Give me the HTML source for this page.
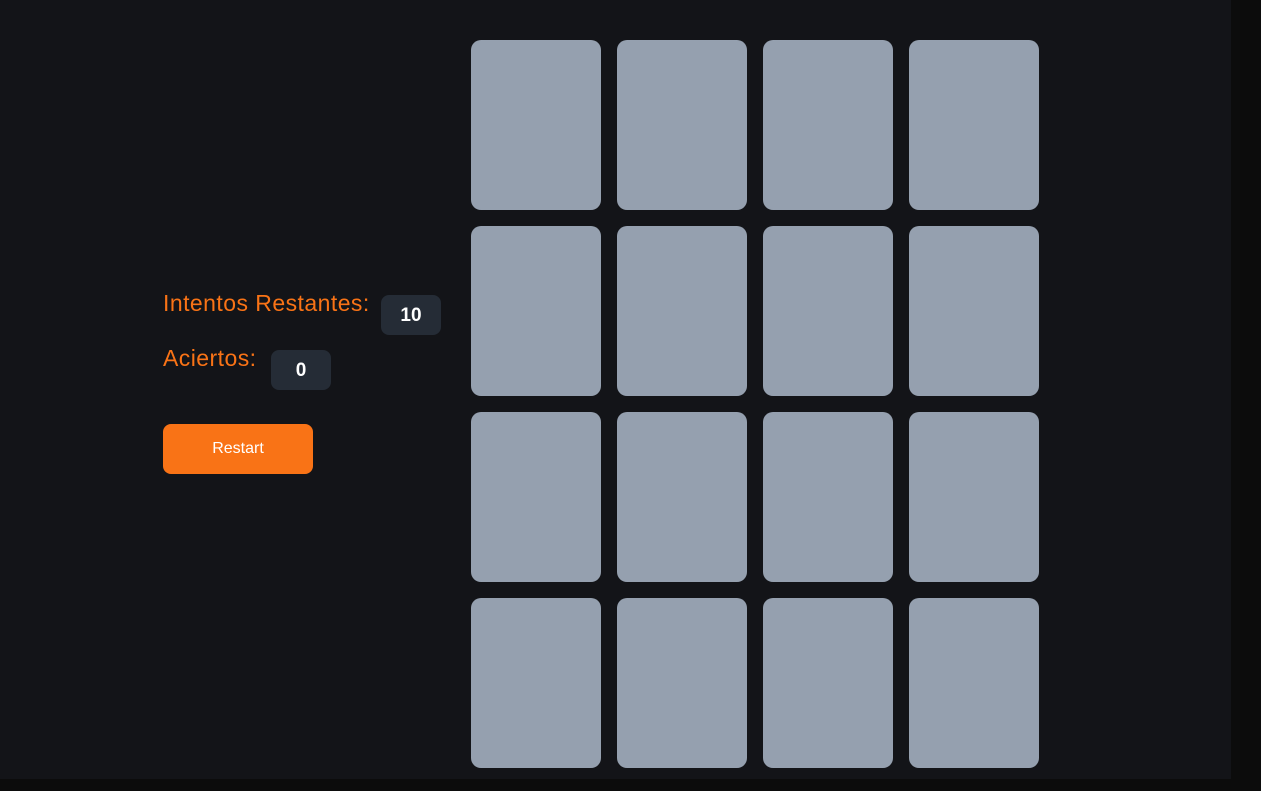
<!DOCTYPE html>
<html><head><style>
body{margin:0;width:1261px;height:791px;background:#0c0c0c;overflow:hidden;font-family:"Liberation Sans",sans-serif;}
.main{position:absolute;left:0;top:0;width:1231px;height:779px;background:#131418;}
.card{position:absolute;width:130px;height:170px;border-radius:10px;background:#95a0af;}
.lbl{position:absolute;color:#f97316;font-size:23px;letter-spacing:0.45px;white-space:nowrap;}
.badge{position:absolute;width:60px;height:40px;border-radius:8px;background:#252c36;color:#fff;font-weight:bold;font-size:19px;text-align:center;line-height:42px;}
.btn{position:absolute;left:163px;top:424px;width:150px;height:50px;border-radius:8px;background:#f97316;color:#fff;font-size:16px;text-align:center;line-height:50px;}
</style></head><body><div class="main">
<div class="lbl" style="left:163px;top:290px">Intentos Restantes:</div>
<div class="badge" style="left:381px;top:295px">10</div>
<div class="lbl" style="left:163px;top:345px">Aciertos:</div>
<div class="badge" style="left:271px;top:350px">0</div>
<div class="btn">Restart</div>
<div class="card" style="left:471px;top:40px"></div><div class="card" style="left:617px;top:40px"></div><div class="card" style="left:763px;top:40px"></div><div class="card" style="left:909px;top:40px"></div>
<div class="card" style="left:471px;top:226px"></div><div class="card" style="left:617px;top:226px"></div><div class="card" style="left:763px;top:226px"></div><div class="card" style="left:909px;top:226px"></div>
<div class="card" style="left:471px;top:412px"></div><div class="card" style="left:617px;top:412px"></div><div class="card" style="left:763px;top:412px"></div><div class="card" style="left:909px;top:412px"></div>
<div class="card" style="left:471px;top:598px"></div><div class="card" style="left:617px;top:598px"></div><div class="card" style="left:763px;top:598px"></div><div class="card" style="left:909px;top:598px"></div>
</div></body></html>
